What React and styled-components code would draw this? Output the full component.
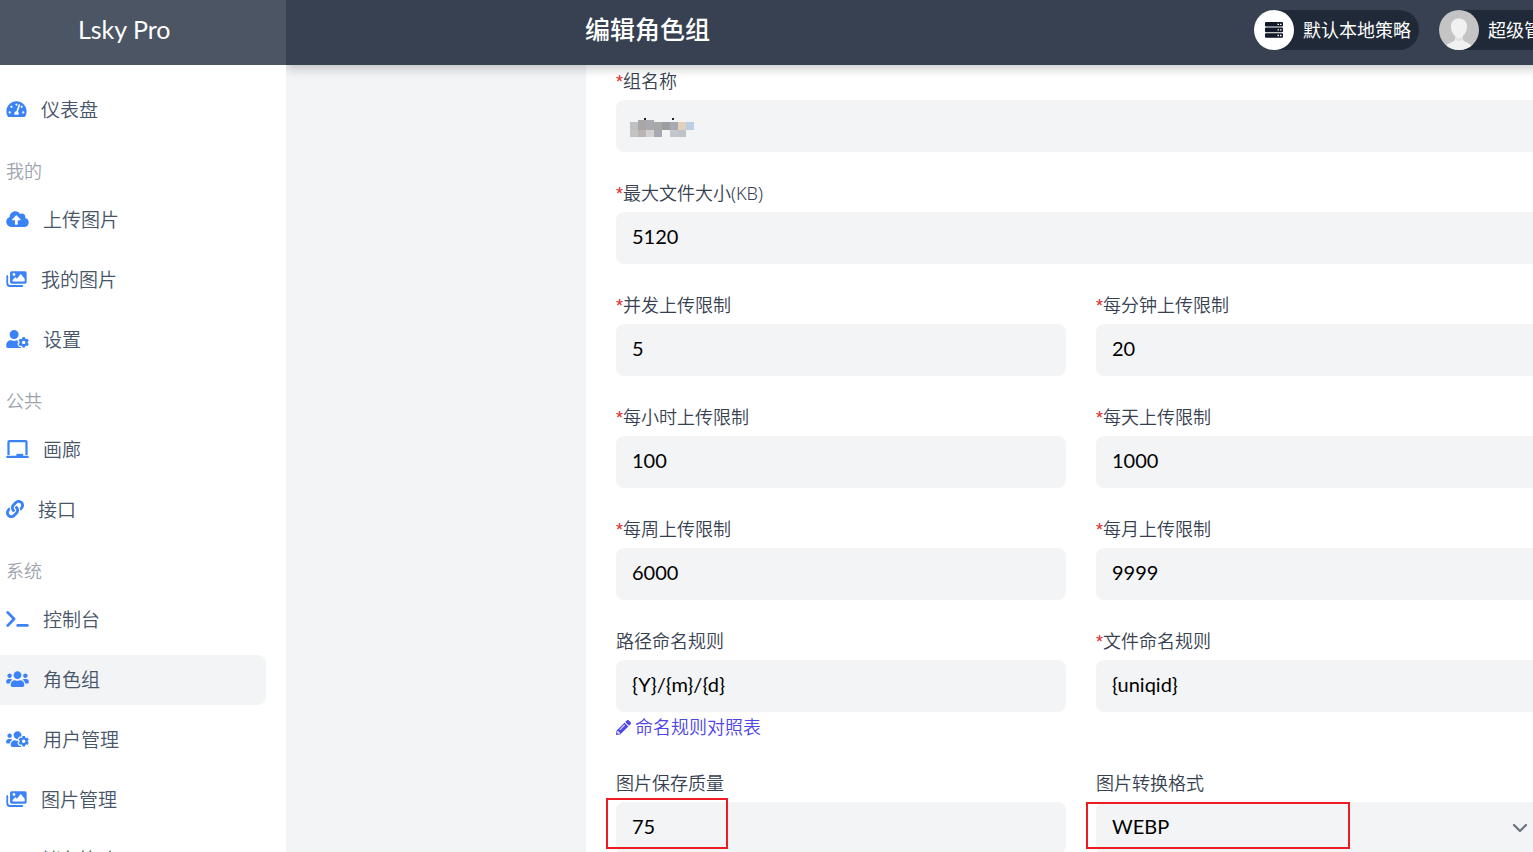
import React from "react";
import styled, { createGlobalStyle } from "styled-components";
import {
  FaCloudUploadAlt,
  FaTachometerAlt,
  FaLink,
  FaUserCog,
  FaUsers,
  FaUsersCog,
  FaPencilAlt,
} from "react-icons/fa";

const Global = createGlobalStyle`
  *, *::before, *::after { box-sizing: border-box; }
  body {
    margin: 0;
    overflow: hidden;
    color: #000;
    font-family: Lato, "Noto Sans CJK SC", sans-serif;
    font-weight: 350;
  }
`;

const Shell = styled.div`
  display: flex;
  height: 100vh;
  overflow: hidden;
  background: #f3f4f6;
`;

const Sidebar = styled.aside`
  position: relative;
  z-index: 2;
  flex: 0 0 286px;
  background: #fff;
  overflow: hidden;
`;

const Brand = styled.a`
  display: flex;
  align-items: center;
  height: 65px;
  padding: 0 0 8px 78px;
  background: #4b5563;
  color: #fff;
  font-size: 25px;
  font-weight: 400;
  text-decoration: none;
`;

const Nav = styled.nav`
  display: flex;
  flex-direction: column;
  gap: 10px;
  padding: 20px 20px 0 0;
`;

const NavHeading = styled.h2`
  margin: 0;
  padding: 13px 0 0 6px;
  color: #9ca3af;
  font-size: 18px;
  font-weight: 350;
  line-height: 27px;
`;

const NavItem = styled.a`
  display: flex;
  flex-shrink: 0;
  align-items: center;
  gap: 14px;
  height: 50px;
  padding: 0 0 2px 6px;
  border-radius: 0 8px 8px 0;
  background: ${(p) => (p.$active ? "#f3f4f6" : "transparent")};
  color: #475569;
  font-size: 19px;
  text-decoration: none;
  white-space: nowrap;

  svg {
    flex-shrink: 0;
    width: ${(p) => p.$iconWidth}px;
    height: 18px;
    color: #3b82f6;
  }
`;

const Caption = styled.span`
  padding-bottom: 2px;
`;

const Main = styled.div`
  display: flex;
  flex: 1;
  flex-direction: column;
  min-width: 0;
`;

const Header = styled.header`
  position: relative;
  z-index: 1;
  display: flex;
  flex-shrink: 0;
  justify-content: space-between;
  min-width: 1300px;
  height: 65px;
  padding: 10px 0 15px 299px;
  background: #374151;
  box-shadow: 0 4px 10px rgba(0, 0, 0, 0.2);
  color: #fff;
`;

const Title = styled.h1`
  margin: 0;
  font-size: 25px;
  font-weight: 500;
  line-height: 38px;
`;

const Actions = styled.div`
  display: flex;
  gap: 20px;
`;

const Pill = styled.button`
  display: flex;
  align-items: center;
  gap: 9px;
  height: 40px;
  padding: 0 8px 0 0;
  border: 0;
  border-radius: 20px;
  background: #1f2937;
  color: #fff;
  font: inherit;
  font-size: 18px;
  font-weight: 400;
  white-space: nowrap;
`;

const Disc = styled.span`
  display: grid;
  place-items: center;
  width: 40px;
  height: 40px;
  overflow: hidden;
  border-radius: 50%;
  background: ${(p) => p.$bg};
`;

const Form = styled.form`
  display: grid;
  grid-template-columns: 1fr 1fr;
  align-items: start;
  gap: 30px;
  min-width: 990px;
  margin-left: 300px;
  padding: 5px 30px 30px;
  background: #fff;
`;

const Field = styled.div`
  position: relative;
  display: flex;
  flex-direction: column;
  grid-column: ${(p) => (p.$wide ? "1 / -1" : "auto")};
`;

const Label = styled.label`
  height: 30px;
  color: #374151;
  font-family: "Noto Sans", "Noto Sans CJK SC", sans-serif;
  font-size: 18px;
  line-height: 23px;
`;

const Star = styled.span`
  color: #dc2626;
  font-family: "Liberation Sans", sans-serif;
  line-height: 1;
`;

const controlStyle = `
  width: 100%;
  height: 52px;
  padding: 0 16px 4px;
  border: 0;
  border-radius: 8px;
  background: #f3f4f6;
  color: #000;
  font: inherit;
  font-size: 20px;
  font-weight: 400;
  outline: 0;
`;

const Input = styled.input`
  ${controlStyle}
`;

const Select = styled.select`
  ${controlStyle}
  appearance: none;
`;

const Chevron = styled.svg`
  position: absolute;
  right: 11px;
  bottom: 11px;
  width: 30px;
  height: 30px;
  pointer-events: none;
`;

const Mosaic = styled.svg`
  position: absolute;
  left: 14px;
  bottom: 14px;
  width: 64px;
  height: 20px;
`;

const HelpLink = styled.a`
  display: flex;
  align-items: center;
  gap: 4px;
  color: #4f46e5;
  font-size: 18px;
  line-height: 30px;
  text-decoration: none;

  svg {
    width: 15px;
    height: 15px;
  }
`;

const Marker = styled.span`
  position: absolute;
  left: -10px;
  top: ${(p) => p.$top}px;
  width: ${(p) => p.$width}px;
  height: ${(p) => p.$height}px;
  border: 2px solid #ed1c24;
  pointer-events: none;
`;

const BoardIcon = () => (
  <svg viewBox="0 0 640 512" fill="none" stroke="currentColor" strokeWidth="64">
    <path d="M64 430V60Q64 34 90 34H550Q576 34 576 60V430" />
    <path d="M30 480H610" strokeLinecap="round" />
    <path d="M288 430H480" strokeWidth="72" />
  </svg>
);

const TerminalIcon = () => (
  <svg
    viewBox="0 0 640 512"
    fill="none"
    stroke="currentColor"
    strokeWidth="78"
    strokeLinecap="round"
    strokeLinejoin="round"
  >
    <path d="M40 68L222 256L40 444" />
    <path d="M326 440H600" />
  </svg>
);

const ImagesIcon = () => (
  <svg viewBox="0 0 576 512" fill="currentColor" fillRule="evenodd">
    <path d="M152 32H528Q576 32 576 80V344Q576 392 528 392H152Q104 392 104 344V80Q104 32 152 32ZM216 88A40 40 0 1 0 216 168A40 40 0 1 0 216 88ZM176 328H520V250L424 130Q408 116 392 130L304 250L270 214Q256 202 242 214L176 284Z" />
    <path d="M24 144Q50 144 50 170V370Q50 424 104 424H450Q478 424 478 452Q478 480 450 480H96Q0 480 0 384V170Q0 144 24 144Z" />
  </svg>
);

const DriveIcon = () => (
  <svg viewBox="0 0 576 512" fill="currentColor">
    <path d="M0 336q0-48 48-48h480q48 0 48 48v96q0 48-48 48H48q-48 0-48-48zM20 260L110 90q14-26 44-26h268q30 0 44 26l90 170z" />
  </svg>
);

const ServerIcon = () => (
  <svg width="18" height="16" viewBox="0 0 18 16">
    {[0, 5.6, 11.2].map((y) => (
      <g key={y}>
        <rect y={y} width="18" height="4.6" rx="1" fill="#111827" />
        <path d={`M12.5 ${y + 2.3}h1.5M15 ${y + 2.3}h1.5`} stroke="#fff" strokeWidth="1.3" />
      </g>
    ))}
  </svg>
);

const Avatar = () => (
  <svg width="40" height="40" viewBox="0 0 40 40">
    <path d="M5 40C7 33 12 33 15 31Q17 30 16 26C12 22 12 18 12 16C12 6 28 6 28 16C28 18 28 22 24 26Q23 30 25 31C28 33 33 33 35 40Z" fill="#f1f1f1" />
    <path d="M16 26Q20 31 24 26L24 29Q20 33 16 29Z" fill="#e2e2e2" />
  </svg>
);

const mosaicCells = [
  [0, 4, "#bfc0c2"], [8, 2, "#aaa6a7"], [16, 2, "#a9aab0"], [24, 4, "#a6aaa6"],
  [32, 4, "#9b9c9f"], [40, 4, "#a9a9b2"], [48, 4, "#e2d2bd"], [56, 4, "#becde6"],
];
const mosaicLower = [
  [0, "#c5c2c0"], [8, "#bab5b5"], [16, "#d5d1d1"], [24, "#a6a8b3"],
  [40, "#c2c8cb"], [48, "#bec3c8"],
];

const menu = [
  { icon: FaTachometerAlt, width: 21, text: "仪表盘" },
  { heading: "我的" },
  { icon: FaCloudUploadAlt, width: 23, text: "上传图片" },
  { icon: ImagesIcon, width: 21, text: "我的图片" },
  { icon: FaUserCog, width: 23, text: "设置" },
  { heading: "公共" },
  { icon: BoardIcon, width: 23, text: "画廊" },
  { icon: FaLink, width: 18, text: "接口" },
  { heading: "系统" },
  { icon: TerminalIcon, width: 23, text: "控制台" },
  { icon: FaUsers, width: 23, text: "角色组", active: true },
  { icon: FaUsersCog, width: 23, text: "用户管理" },
  { icon: ImagesIcon, width: 21, text: "图片管理" },
  { icon: DriveIcon, width: 21, text: "储存策略" },
];

const limits = [
  ["concurrent", "并发上传限制", "5"],
  ["minute", "每分钟上传限制", "20"],
  ["hour", "每小时上传限制", "100"],
  ["day", "每天上传限制", "1000"],
  ["week", "每周上传限制", "6000"],
  ["month", "每月上传限制", "9999"],
];

function TextField({ id, label, value, required, wide, children }) {
  return (
    <Field $wide={wide}>
      <Label htmlFor={id}>
        {required && <Star>*</Star>}
        {label}
      </Label>
      <Input id={id} defaultValue={value} />
      {children}
    </Field>
  );
}

export default function App() {
  return (
    <Shell>
      <Global />
      <Sidebar>
        <Brand href="#">Lsky Pro</Brand>
        <Nav>
          {menu.map(({ icon: Icon, width, text, heading, active }) =>
            heading ? (
              <NavHeading key={heading}>{heading}</NavHeading>
            ) : (
              <NavItem key={text} href="#" $active={active} $iconWidth={width}>
                <Icon />
                <Caption>{text}</Caption>
              </NavItem>
            )
          )}
        </Nav>
      </Sidebar>
      <Main>
        <Header>
          <Title>编辑角色组</Title>
          <Actions>
            <Pill type="button">
              <Disc $bg="#fff"><ServerIcon /></Disc>
              <Caption>默认本地策略</Caption>
            </Pill>
            <Pill type="button">
              <Disc $bg="#c4c4c4"><Avatar /></Disc>
              <Caption>超级管理员</Caption>
            </Pill>
          </Actions>
        </Header>
        <Form>
          <TextField id="name" label="组名称" value="" required wide>
            <Mosaic viewBox="0 0 64 20" shapeRendering="crispEdges">
              <path d="M14 0h2v2h-2zM42 0h2v2h-2z" fill="#222" />
              {mosaicCells.map(([x, y, fill]) => (
                <rect key={x} x={x} y={y} width="8" height={12 - y} fill={fill} />
              ))}
              {mosaicLower.map(([x, fill]) => (
                <rect key={x} x={x} y="12" width="8" height="7" fill={fill} />
              ))}
            </Mosaic>
          </TextField>
          <TextField id="size" label="最大文件大小(KB)" value="5120" required wide />
          {limits.map(([id, label, value]) => (
            <TextField key={id} id={id} label={label} value={value} required />
          ))}
          <TextField id="path" label="路径命名规则" value="{Y}/{m}/{d}">
            <HelpLink href="#">
              <FaPencilAlt />
              命名规则对照表
            </HelpLink>
          </TextField>
          <TextField id="file" label="文件命名规则" value="{uniqid}" required />
          <TextField id="quality" label="图片保存质量" value="75">
            <Marker $top={26} $width={122} $height={51} />
          </TextField>
          <Field>
            <Label htmlFor="format">图片转换格式</Label>
            <Select id="format" defaultValue="WEBP">
              <option>WEBP</option>
            </Select>
            <Chevron viewBox="0 0 20 20" fill="none" stroke="#6b7280" strokeWidth="1.5" strokeLinecap="round" strokeLinejoin="round">
              <path d="M6 8l4 4 4-4" />
            </Chevron>
            <Marker $top={30} $width={264} $height={47} />
          </Field>
        </Form>
      </Main>
    </Shell>
  );
}
